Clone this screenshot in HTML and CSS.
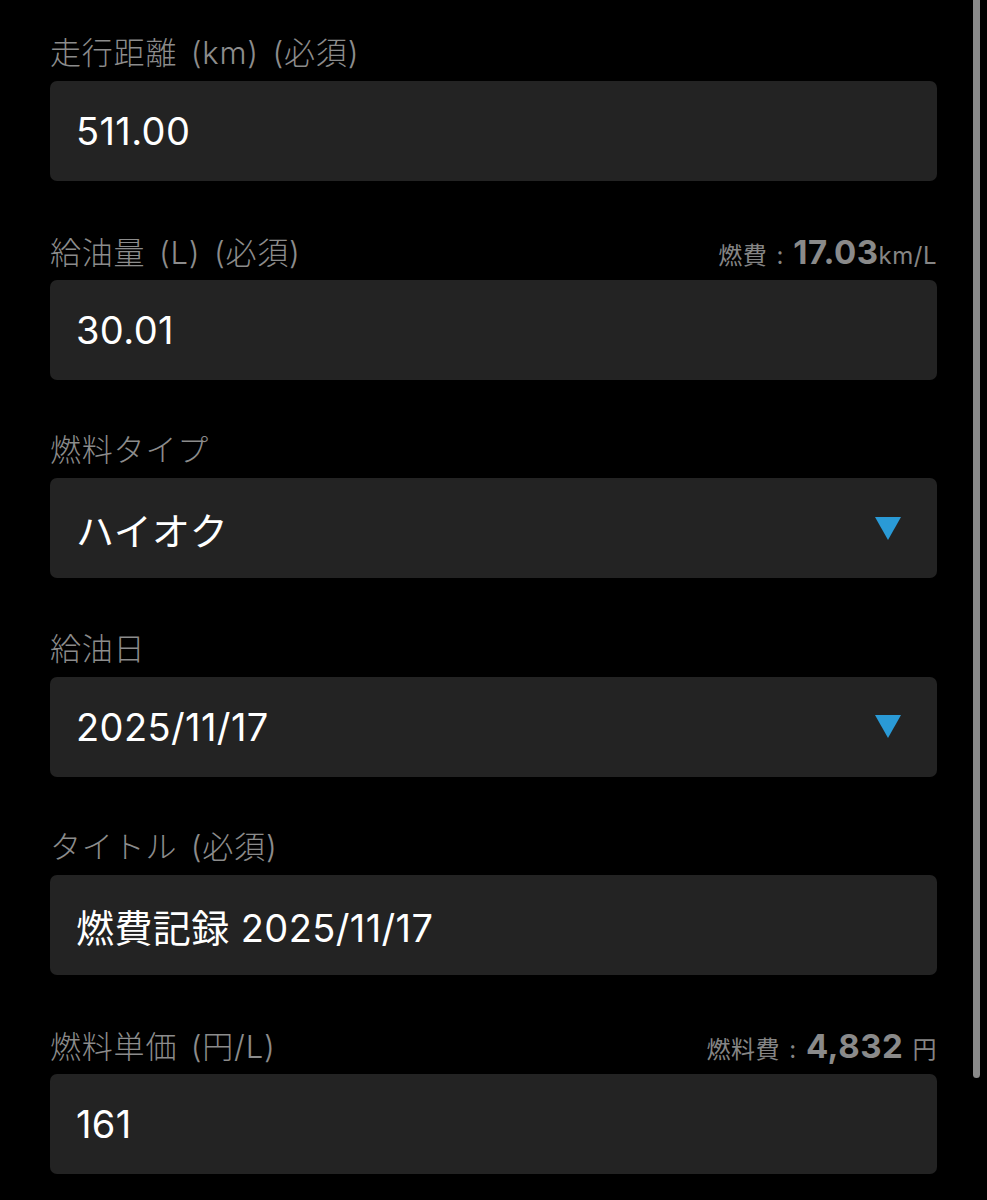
FILE: index.html
```html
<!DOCTYPE html>
<html lang="ja">
<head>
    <meta charset="UTF-8">
    <meta name="viewport" content="width=device-width, initial-scale=1.0">
    <title>燃費記録</title>
    <link rel="stylesheet" href="styles.css">
</head>
<body>
    <div class="form">
        <div class="group">
            <div class="label-row">
                <span class="label">走行距離 (km) (必須)</span>
            </div>
            <div class="field">511.00</div>
        </div>

        <div class="group">
            <div class="label-row">
                <span class="label">給油量 (L) (必須)</span>
                <span class="hint">燃費 : <b>17.03</b>km/L</span>
            </div>
            <div class="field">30.01</div>
        </div>

        <div class="group">
            <div class="label-row">
                <span class="label">燃料タイプ</span>
            </div>
            <div class="field select">
                <span>ハイオク</span>
                <span class="arrow"></span>
            </div>
        </div>

        <div class="group">
            <div class="label-row">
                <span class="label">給油日</span>
            </div>
            <div class="field select">
                <span>2025/11/17</span>
                <span class="arrow"></span>
            </div>
        </div>

        <div class="group">
            <div class="label-row">
                <span class="label">タイトル (必須)</span>
            </div>
            <div class="field">燃費記録 2025/11/17</div>
        </div>

        <div class="group">
            <div class="label-row">
                <span class="label">燃料単価 (円/L)</span>
                <span class="hint">燃料費 : <b>4,832</b> 円</span>
            </div>
            <div class="field">161</div>
        </div>
    </div>

    <div class="scrollbar"></div>
</body>
</html>
```

FILE: styles.css
```css
* {
    box-sizing: border-box;
}
body {
    margin: 0;
    background: #000;
    font-family: Inter, "Noto Sans CJK JP", sans-serif;
    color: #fff;
    min-height: 1200px;
    overflow: hidden;
}
.form {
    padding: 33px 50px 0 50px;
    display: flex;
    flex-direction: column;
    gap: 50.6px;
}
.label-row {
    display: flex;
    justify-content: space-between;
    align-items: baseline;
    height: 40px;
    line-height: 40px;
    margin-bottom: 8px;
}
.label {
    font-size: 31px;
    font-weight: 300;
    letter-spacing: 0.8px;
    word-spacing: 4px;
    color: #8c8c8c;
}
.hint {
    font-size: 24px;
    color: #858585;
    letter-spacing: 0.5px;
    word-spacing: 2px;
}
.hint b {
    font-size: 33px;
    font-weight: 700;
    letter-spacing: 0.5px;
    color: #8a8a8a;
}
.field {
    height: 100px;
    background: #232323;
    border-radius: 7px;
    padding: 0 36px 0 26px;
    display: flex;
    align-items: center;
    font-size: 38px;
    letter-spacing: 0.4px;
    color: #fff;
}
.select {
    justify-content: space-between;
}
.arrow {
    width: 0;
    height: 0;
    border-left: 13px solid transparent;
    border-right: 13px solid transparent;
    border-top: 23px solid #2a9ad6;
}
.scrollbar {
    position: fixed;
    top: 0;
    right: 7px;
    width: 7px;
    height: 1078px;
    background: #8a8a8a;
    border-radius: 0 0 4px 4px;
}
```
